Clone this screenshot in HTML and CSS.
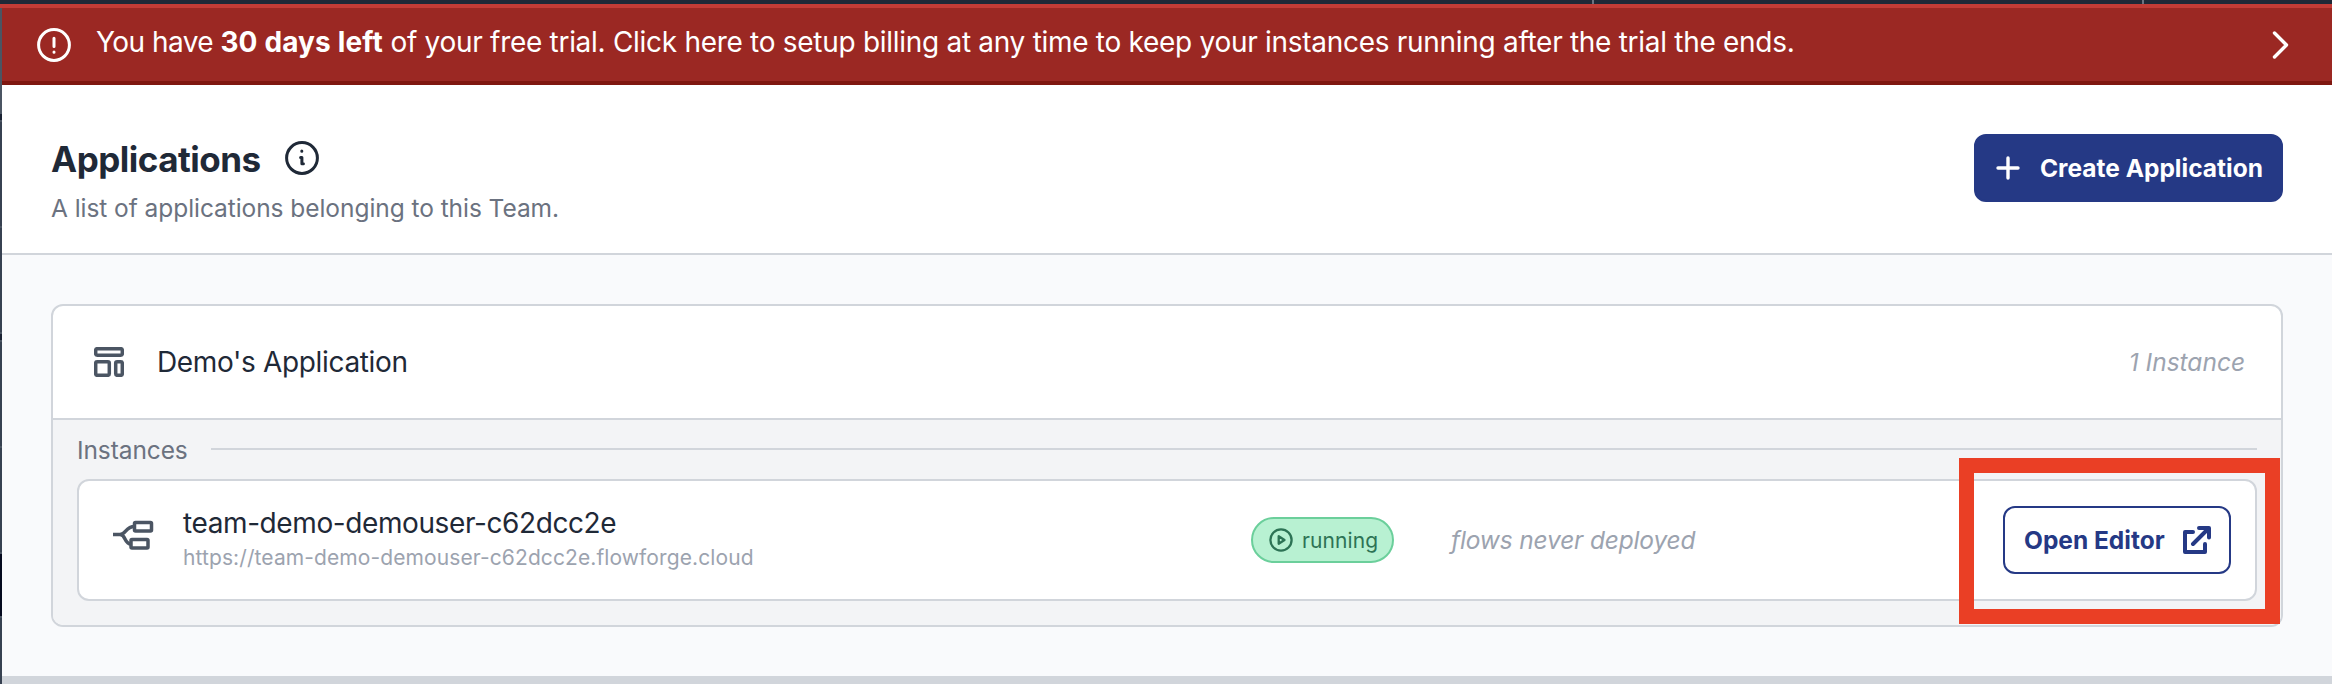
FILE: index.html
```html
<!DOCTYPE html>
<html lang="en">
<head>
<meta charset="utf-8">
<title>Applications</title>
<link rel="stylesheet" href="styles.css">
</head>
<body>
<div class="topbar"><i class="topbar-divider"></i><i class="topbar-divider last"></i></div>
<div class="shell">
  <div class="sidebar-edge"></div>
  <main class="main">
    <div class="banner">
      <svg class="icon" width="38" height="38" viewBox="0 0 38 38" fill="none" stroke="#fff" stroke-width="3" stroke-linecap="round"><circle cx="19" cy="19" r="15.4"/><path d="M19 12.2v8.2M19 26v.3"/></svg>
      <p class="banner-text"><span class="t1">You have </span><b>30 days left</b><span class="t2"> of your free trial. Click here to setup billing at any time to keep your instances running after the trial the ends.</span></p>
      <svg class="chevron" width="20" height="32" viewBox="0 0 20 32" fill="none" stroke="#fff" stroke-width="3.4" stroke-linecap="round" stroke-linejoin="round"><path d="M3.500 4l12 12-12 12"/></svg>
    </div>
    <header class="page-header">
      <div>
        <div class="title-row">
          <h1>Applications</h1>
          <svg class="icon" width="38" height="38" viewBox="0 0 38 38" fill="none" stroke="#1f2937" stroke-width="3" stroke-linecap="round" stroke-linejoin="round"><circle cx="19" cy="19" r="15.4"/><path d="M18.8 12v.2M17.6 18.4h1.3v6.400h1.500"/></svg>
        </div>
        <p class="subtitle">A list of applications belonging to this Team.</p>
      </div>
      <button class="btn primary">
        <svg width="24" height="24" viewBox="0 0 24 24" fill="none" stroke="#fff" stroke-width="3.400" stroke-linecap="round"><path d="M12 2v20M2 12h20"/></svg>
        <span>Create Application</span>
      </button>
    </header>
    <section class="content">
      <article class="app-card">
        <div class="app-head">
          <svg width="30" height="30" viewBox="0 0 30 30" fill="none" stroke="#4b5563" stroke-width="3.500"><rect x="1.700" y="1.700" width="26.600" height="6.600" rx="1.500"/><rect x="1.700" y="14.700" width="13.600" height="13.600" rx="1.500"/><rect x="21.700" y="14.700" width="6.600" height="13.600" rx="1.500"/></svg>
          <span class="app-name">Demo's Application</span>
          <span class="count">1 Instance</span>
        </div>
        <div class="instances">
          <div class="label-row"><span>Instances</span><hr></div>
          <div class="instance">
            <svg class="node" width="41" height="31" viewBox="0 0 41 31" fill="none" stroke="#4b5563" stroke-width="3.500"><rect x="21.500" y="2.500" width="17" height="8.500" rx="1"/><rect x="18" y="19.500" width="17" height="8.500" rx="1"/><path d="M0 14.500h7c6 0 5.500-8 14.500-8M7 14.500c6 0 4 9.500 11 9.500"/></svg>
            <div class="names">
              <div class="name">team-demo-demouser-c62dcc2e</div>
              <div class="url">https://team-demo-demouser-c62dcc2e.flowforge.cloud</div>
            </div>
            <div class="badge">
              <svg width="24" height="24" viewBox="0 0 24 24" fill="none" stroke="#2d7355" stroke-width="2.300" stroke-linejoin="round"><circle cx="12" cy="12" r="10.600"/><path d="M9.700 8.200v7.600l5.800-3.800z"/></svg>
              <span>running</span>
            </div>
            <span class="deployed">flows never deployed</span>
            <button class="btn outline">
              <span>Open Editor</span>
              <svg width="28" height="28" viewBox="0 0 28 28" fill="none" stroke="#253985" stroke-width="4" stroke-linecap="round" stroke-linejoin="round"><path d="M10 6H2v20h20v-8M16 2h10v9.500M25.500 2.500L10 18"/></svg>
            </button>
            <div class="highlight"></div>
          </div>
        </div>
      </article>
    </section>
    <div class="bottom-strip"></div>
  </main>
</div>
</body>
</html>
```
FILE: styles.css
```css
* { box-sizing: border-box; }
body { margin: 0; height: 684px; overflow: hidden; font-family: Inter, "Liberation Sans", sans-serif; color: #1f2937; display: flex; flex-direction: column; }
svg { display: block; flex: none; }
p, h1 { margin: 0; }
span, p, h1, .name, .url { white-space: nowrap; }

.topbar { height: 4px; flex: none; background: #1f2937; display: flex; padding-left: 1592px; gap: 548px; }
.topbar-divider { width: 2px; height: 4px; background: #6b7280; }
.shell { flex: 1; display: flex; border-top: 4px solid #c23c36; min-height: 0; }
.sidebar-edge {
  width: 2px; flex: none;
  background: linear-gradient(#4b5563 0 106px, #1a2233 106px 112px, #4b5563 112px 114px, #374151 114px 218px, #4b5563 218px 220px, #374151 220px 324px, #4b5563 324px 326px, #1a2233 326px 332px, #4b5563 332px 334px, #374151 334px 438px, #4b5563 438px 440px, #374151 440px 544px, #4b5563 544px 546px, #050a1f 546px 608px, #4b5563 608px 610px, #374151 610px);
}
.main { flex: 1; min-width: 0; display: flex; flex-direction: column; background: #f9fafc; }

.banner { height: 77px; flex: none; display: flex; align-items: center; background: #9b2823; border-bottom: 4px solid #7f1710; color: #fff; font-size: 28px; padding: 0 41px 0 33px; }
.banner-text { margin: 0 auto 6px 23px; line-height: 36px; white-space: pre; }
.banner-text span, .banner-text b { white-space: pre; }
.banner-text .t1 { letter-spacing: -0.55px; }
.banner-text b { letter-spacing: 0.14px; }
.banner-text .t2 { letter-spacing: -0.29px; }

.page-header { height: 170px; flex: none; display: flex; justify-content: space-between; background: #fff; border-bottom: 2px solid #d1d5db; padding: 49px 49px 0 49px; }
.title-row { display: flex; align-items: center; gap: 22px; height: 50px; }
.title-row .icon { margin-bottom: 3px; }
h1 { font-size: 35px; font-weight: 700; letter-spacing: -0.5px; line-height: 50px; }
.subtitle { margin-top: 6px; font-size: 24.5px; line-height: 36px; color: #6b7280; letter-spacing: -0.06px; }

.btn { display: flex; align-items: center; height: 68px; border-radius: 12px; font: 700 24.5px/36px Inter, sans-serif; letter-spacing: 0; border: 2px solid #253985; }
.btn.primary { width: 309px; background: #253985; color: #fff; padding: 0 0 0 20px; gap: 20px; }
.btn.outline { width: 228px; background: #fff; color: #253985; padding: 0 18px 0 19px; justify-content: space-between; }

.content { flex: 1; min-height: 0; padding: 49px; }
.app-card { height: 323px; border: 2px solid #d1d5db; border-radius: 12px; background: #fff; }
.app-head { height: 112px; display: flex; align-items: center; padding: 0 36px 0 41px; }
.app-name { margin-left: 33px; font-size: 28px; letter-spacing: -0.35px; }
.count { margin-left: auto; font-size: 24.5px; font-style: italic; color: #9ca3af; }
.instances { height: 207px; background: #f3f4f6; border-top: 2px solid #d1d5db; border-radius: 0 0 10px 10px; padding: 0 24px; }
.label-row { height: 59px; display: flex; align-items: center; gap: 23px; font-size: 24.5px; letter-spacing: -0.1px; color: #6b7280; }
.label-row hr { flex: 1; margin: 0 0 2px; border: 0; height: 2px; background: #d1d5db; }
.instance { position: relative; height: 122px; display: flex; align-items: center; background: #fff; border: 2px solid #d1d5db; border-radius: 12px; padding: 0 24px 0 34px; }
.node { margin-bottom: 10px; }
.names { width: 1068px; margin-left: 29px; }
.name { font-size: 28px; line-height: 36px; letter-spacing: -0.4px; }
.url { font-size: 21px; line-height: 34px; color: #9ca3af; letter-spacing: 0.1px; }
.badge { width: 143px; height: 46px; display: flex; align-items: center; gap: 9px; padding-left: 16px; border: 2px solid #6bcf9b; border-radius: 23px; background: #b8f1d2; color: #2d7355; font-size: 21px; letter-spacing: 0.1px; }
.deployed { margin-left: 57px; font-size: 24.5px; font-style: italic; color: #9ca3af; letter-spacing: -0.16px; }
.instance .btn { margin-left: auto; }
.highlight { position: absolute; right: -25px; top: -23px; width: 321px; height: 166px; border: 15px solid #ea3f25; }
.bottom-strip { height: 8px; flex: none; background: #d1d5db; }
```
